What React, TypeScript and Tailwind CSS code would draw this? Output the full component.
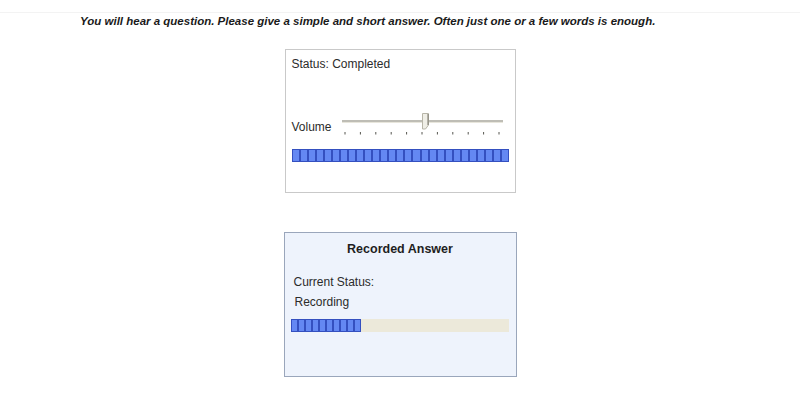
import React from "react";

const TICKS = Array.from({ length: 11 }, (_, i) => i);

const Segments = ({ count, width }: { count: number; width: number }) => (
  <div className="flex h-[13px]">
    {Array.from({ length: count }, (_, i) => (
      <div
        key={i}
        style={{ width }}
        className="h-full border border-[#3450c0] bg-[#6488f3]"
      />
    ))}
  </div>
);

const VolumeSlider = () => (
  <svg width="164" height="24" viewBox="0 0 164 24" className="block">
    {/* track */}
    <line x1="1" y1="8" x2="162" y2="8" stroke="#a9a79c" strokeWidth="1.5" />
    <line x1="1" y1="9.5" x2="162" y2="9.5" stroke="#e8e6dc" strokeWidth="1" />
    {/* ticks */}
    {TICKS.map((i) => (
      <line
        key={i}
        x1={4 + i * 15.4}
        y1="19"
        x2={4 + i * 15.4}
        y2="21.5"
        stroke="#55554f"
        strokeWidth="1"
      />
    ))}
    {/* thumb */}
    <path
      d="M81.5 0.5 H87.5 V12 L84.5 16 H81.5 Z"
      fill="#efeee6"
      stroke="#b7b5a8"
      strokeWidth="1"
    />
    <line x1="87" y1="1" x2="87" y2="12" stroke="#77756b" strokeWidth="1" />
  </svg>
);

export default function App() {
  return (
    <div className="min-h-[402px] w-[800px] bg-white font-['Liberation_Sans',Arial,sans-serif]">
      <div className="h-[13px] border-b border-[#f3f3f3]" />
      <p className="pl-[80px] text-[11.5px] font-bold italic leading-[16px] text-[#1a1a1a]">
        You will hear a question. Please give a simple and short answer. Often just one or a few words is enough.
      </p>

      <div className="mt-[20px] flex flex-col items-center">
        {/* player */}
        <div className="h-[144px] w-[231px] border border-[#c9c9c9] bg-white px-[6px] pt-[7px]">
          <div className="text-[12px] leading-[14px] text-[#2b2b2b]">Status: Completed</div>
          <div className="mt-[42px] flex items-start">
            <span className="mt-[7px] w-[49px] text-[12px] leading-[14px] text-[#2b2b2b]">Volume</span>
            <VolumeSlider />
          </div>
          <div className="mt-[12px] w-[218px]">
            <Segments count={27} width={8.07} />
          </div>
        </div>

        {/* recorder */}
        <div className="mt-[39px] h-[145px] w-[233px] border border-[#9aa6bb] bg-[#eef3fc] px-[6px] pt-[9px]">
          <div className="text-center text-[12.5px] font-bold leading-[15px] text-[#1e1e1e]">
            Recorded Answer
          </div>
          <div className="mt-[18px] pl-[3px] text-[12px] leading-[14px] text-[#2b2b2b]">Current Status:</div>
          <div className="mt-[6px] pl-[4px] text-[12px] leading-[14px] text-[#2b2b2b]">Recording</div>
          <div className="mt-[10px] flex h-[13px] w-[218px] bg-[#ece9da]">
            <Segments count={10} width={7} />
          </div>
        </div>
      </div>
    </div>
  );
}
